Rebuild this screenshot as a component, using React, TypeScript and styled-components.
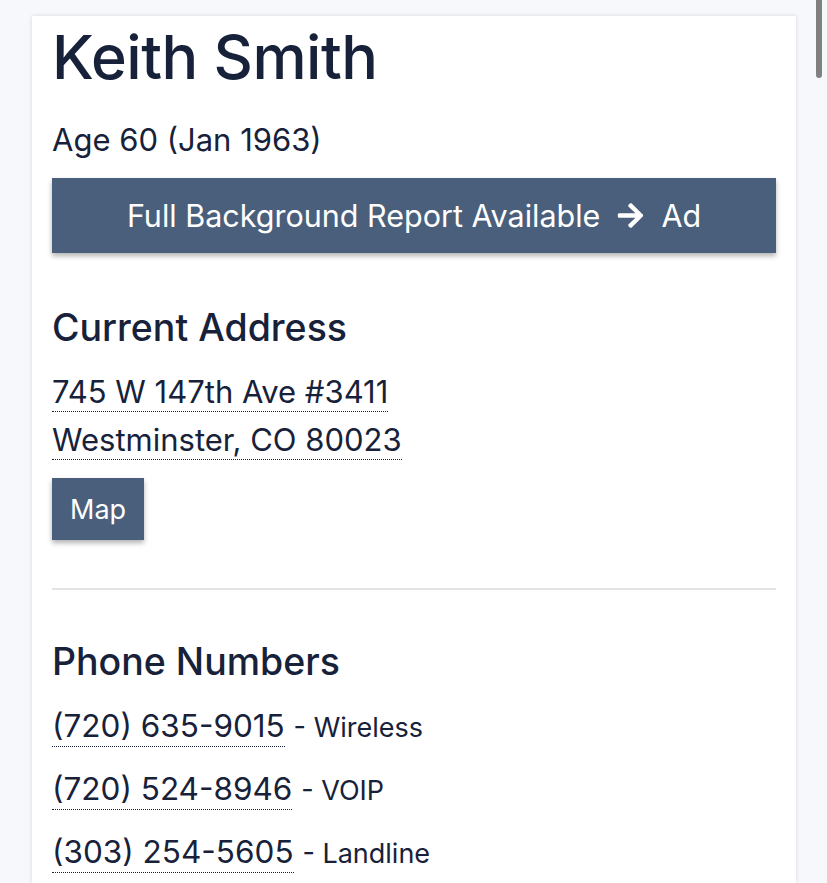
import styled, { createGlobalStyle } from "styled-components";
import { FaArrowRight } from "react-icons/fa";

const colors = {
  page: "#f7f8fc",
  ink: "#17223a",
  slate: "#4a5f7b",
  rule: "#e4e4e6",
};

const GlobalStyle = createGlobalStyle`
  html, body {
    margin: 0;
    padding: 0;
    height: 100%;
    overflow: hidden;
    background: ${colors.page};
  }
  body {
    font-family: Inter, "Noto Sans", "Liberation Sans", sans-serif;
    color: ${colors.ink};
  }
`;

const Page = styled.main`
  height: 100vh;
  padding: 16px 31px 0 32px;
  box-sizing: border-box;
`;

const Card = styled.section`
  background: #fff;
  height: 100%;
  padding: 5px 20px 0;
  box-sizing: border-box;
  box-shadow: 0 0 4px rgba(0, 0, 0, 0.14);
`;

const Name = styled.h1`
  margin: 0;
  font-size: 61px;
  line-height: 72px;
  font-weight: 500;
  letter-spacing: -0.5px;
`;

const Age = styled.p`
  margin: 27px 0 0;
  font-size: 31px;
  line-height: 40px;
`;

const Button = styled.a<{ $wide?: boolean }>`
  display: ${(p) => (p.$wide ? "flex" : "inline-flex")};
  align-items: center;
  justify-content: center;
  gap: 16px;
  background: ${colors.slate};
  color: #fff;
  text-decoration: none;
  box-shadow: 0 3px 5px rgba(0, 0, 0, 0.3);
  font-size: ${(p) => (p.$wide ? "30.5px" : "27px")};
  height: ${(p) => (p.$wide ? "75px" : "62px")};
  padding: 0 18px;
  box-sizing: border-box;
`;

const ReportButton = styled(Button)`
  margin-top: 18px;
`;

const Section = styled.div<{ $top: number }>`
  padding-top: ${(p) => p.$top}px;
`;

const Heading = styled.h2`
  margin: 0;
  font-size: 37.5px;
  line-height: 44px;
  font-weight: 500;
`;

const AddressBlock = styled.div`
  margin-top: 18px;
`;

const Line = styled.div`
  font-size: 31px;
  line-height: 48px;
`;

const Dotted = styled.span`
  border-bottom: 1px dotted ${colors.ink};
  padding-bottom: 1px;
`;

const MapButton = styled(Button)`
  margin-top: 14px;
`;

const Divider = styled.hr`
  border: 0;
  height: 2px;
  background: ${colors.rule};
  margin: 48px 0 0;
`;

const PhoneList = styled.div`
  margin-top: 11px;
`;

const PhoneRow = styled.div`
  font-size: 31.5px;
  line-height: 61px;
`;

const PhoneType = styled.span`
  font-size: 27px;
`;

const ScrollThumb = styled.div`
  position: fixed;
  top: 0;
  right: 5px;
  width: 6px;
  height: 78px;
  border-radius: 0 0 3px 3px;
  background: #808080;
`;

const phones = [
  { number: "(720) 635-9015", kind: "Wireless" },
  { number: "(720) 524-8946", kind: "VOIP" },
  { number: "(303) 254-5605", kind: "Landline" },
];

export default function App() {
  return (
    <>
      <GlobalStyle />
      <Page>
        <Card>
          <Name>Keith Smith</Name>
          <Age>Age 60 (Jan 1963)</Age>
          <ReportButton $wide href="#">
            <span>Full Background Report Available</span>
            <FaArrowRight size={29} />
            <span>Ad</span>
          </ReportButton>

          <Section $top={53}>
            <Heading>Current Address</Heading>
            <AddressBlock>
              <Line>
                <Dotted>745 W 147th Ave #3411</Dotted>
              </Line>
              <Line>
                <Dotted>Westminster, CO 80023</Dotted>
              </Line>
            </AddressBlock>
            <MapButton href="#">Map</MapButton>
          </Section>

          <Divider />

          <Section $top={50}>
            <Heading>Phone Numbers</Heading>
            <PhoneList>
              {phones.map((p) => (
                <PhoneRow key={p.number}>
                  <Dotted>{p.number}</Dotted> <PhoneType>- {p.kind}</PhoneType>
                </PhoneRow>
              ))}
            </PhoneList>
          </Section>
        </Card>
      </Page>
      <ScrollThumb />
    </>
  );
}
